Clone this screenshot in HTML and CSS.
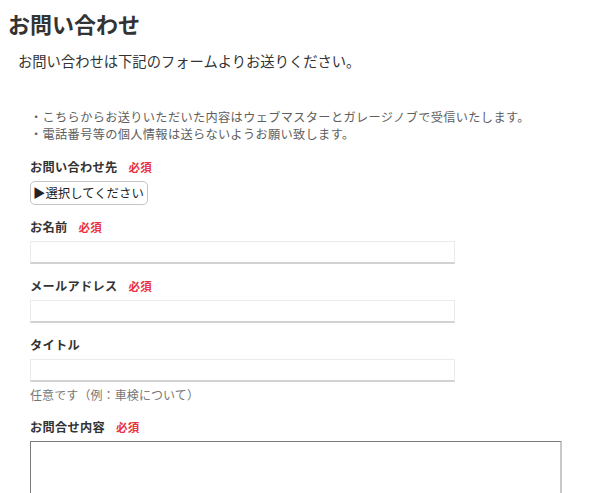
FILE: index.html
```html
<!DOCTYPE html>
<html lang="ja">
<head>
  <meta charset="UTF-8" />
  <meta name="viewport" content="width=device-width, initial-scale=1.0" />
  <title>お問い合わせ</title>
  <link rel="stylesheet" href="styles.css">
</head>
<body>
  <h1>お問い合わせ</h1>
  <p class="lead">お問い合わせは下記のフォームよりお送りください。</p>

  <div class="contact">
    <ul class="notes">
      <li>・こちらからお送りいただいた内容はウェブマスターとガレージノブで受信いたします。</li>
      <li>・電話番号等の個人情報は送らないようお願い致します。</li>
    </ul>

    <div class="field">
      <label>お問い合わせ先<span class="req">必須</span></label>
      <select class="select">
        <option>▶選択してください</option>
      </select>
    </div>

    <div class="field">
      <label>お名前<span class="req">必須</span></label>
      <input type="text" class="input">
    </div>

    <div class="field">
      <label>メールアドレス<span class="req">必須</span></label>
      <input type="text" class="input">
    </div>

    <div class="field">
      <label>タイトル</label>
      <input type="text" class="input">
      <p class="hint">任意です（例：車検について）</p>
    </div>

    <div class="field">
      <label>お問合せ内容<span class="req">必須</span></label>
      <textarea class="textarea"></textarea>
    </div>
  </div>
</body>
</html>
```

FILE: styles.css
```css
body {
  margin: 0;
  padding: 0 8px;
  font-family: "Noto Sans CJK JP", sans-serif;
  color: #333;
  background: white;
}
h1 {
  font-size: 22px;
  font-weight: bold;
  line-height: 30px;
  margin: 8px 0 0;
}
.lead {
  font-size: 14.3px;
  line-height: 22px;
  margin: 12px 0 0;
  padding-left: 10px;
}
.contact {
  padding-left: 22px;
}
.notes {
  list-style: none;
  margin: 37px 0 0;
  padding: 0;
  font-size: 12.2px;
  letter-spacing: 0.35px;
  line-height: 17px;
  color: #5e5e5e;
}
.field {
  margin-top: 14px;
}
.field + .field {
  margin-top: 12px;
}
label {
  display: block;
  font-size: 12.2px;
  letter-spacing: 0.3px;
  font-weight: bold;
  line-height: 20px;
  margin-bottom: 4px;
}
.req {
  color: #e8323f;
  font-size: 11.5px;
  margin-left: 11px;
}
.select {
  appearance: none;
  -webkit-appearance: none;
  display: block;
  height: 24px;
  width: 118px;
  padding: 0 2px;
  font-family: inherit;
  font-size: 12.4px;
  color: #222;
  background: white;
  border: 1px solid #c4c4c4;
  border-radius: 5px;
}
.input {
  display: block;
  box-sizing: border-box;
  width: 425px;
  height: 23px;
  border: 1px solid #ebebeb;
  border-bottom: 2px solid #d2d2d2;
  background: white;
}
.hint {
  font-size: 12px;
  letter-spacing: 0.1px;
  line-height: 20px;
  color: #777;
  margin: 3px 0 0;
}
.textarea {
  display: block;
  box-sizing: border-box;
  width: 532px;
  height: 120px;
  border-style: solid;
  border-width: 1px 2px 1px 1px;
  border-color: #7a7a7a #c8c8c8 #c8c8c8 #7a7a7a;
  resize: none;
}
```
